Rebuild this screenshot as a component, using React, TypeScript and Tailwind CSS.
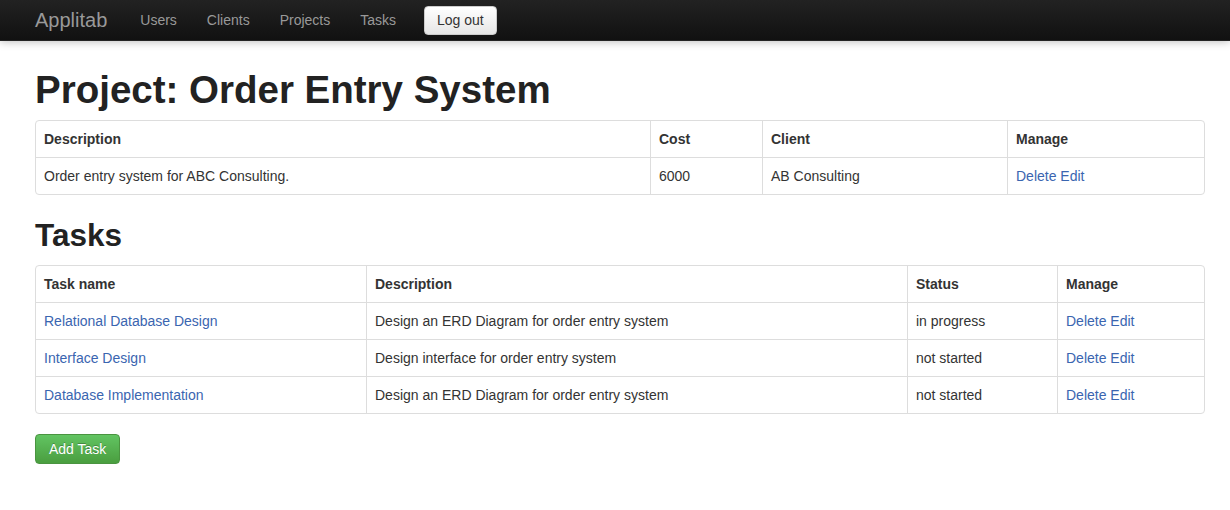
import clsx from "clsx";

const navLinks = ["Users", "Clients", "Projects", "Tasks"];

const tasks = [
  { name: "Relational Database Design", description: "Design an ERD Diagram for order entry system", status: "in progress" },
  { name: "Interface Design", description: "Design interface for order entry system", status: "not started" },
  { name: "Database Implementation", description: "Design an ERD Diagram for order entry system", status: "not started" },
];

function Cell({ children, head, first, top, className }: { children: React.ReactNode; head?: boolean; first?: boolean; top?: boolean; className?: string }) {
  const Tag = head ? "th" : "td";
  return (
    <Tag
      className={clsx(
        "border-[#dddddd] px-2 py-2 text-left align-top leading-5",
        head ? "font-bold" : "font-normal",
        !first && "border-l",
        !top && "border-t",
        className,
      )}
    >
      {children}
    </Tag>
  );
}

function ManageLinks() {
  return (
    <span className="text-[#3a65b0]">
      <a>Delete</a> <a>Edit</a>
    </span>
  );
}

export default function App() {
  return (
    <div className="min-h-[510px] bg-white font-['Liberation_Sans',Arial,sans-serif] text-[14px] leading-5 text-[#333333]">
      <div className="h-[41px] border-b border-[#252525] bg-gradient-to-b from-[#222222] to-[#111111] shadow-[0_1px_8px_rgba(0,0,0,0.25)]">
        <div className="flex h-10 items-center pl-[35px]">
          <span className="pr-[18px] text-[20px] font-light leading-5 text-[#999999]">Applitab</span>
          {navLinks.map((link) => (
            <span key={link} className="px-[15px] text-[14px] text-[#999999]">
              {link}
            </span>
          ))}
          <button className="ml-[13px] h-[29px] rounded-[4px] border border-[#cccccc] bg-gradient-to-b from-white to-[#e6e6e6] px-3 text-[14px] leading-5 text-[#333333]">
            Log out
          </button>
        </div>
      </div>

      <div className="px-[35px] pt-[19px]">
        <h1 className="my-[10px] text-[38.5px] font-bold leading-10 text-[#222222]">Project: Order Entry System</h1>

        <table className="mb-5 w-[1170px] table-fixed border-separate border-spacing-0 rounded-[4px] border border-[#dddddd]">
          <thead>
            <tr>
              <Cell head first top className="w-[614px]">Description</Cell>
              <Cell head top className="w-[112px]">Cost</Cell>
              <Cell head top className="w-[245px]">Client</Cell>
              <Cell head top>Manage</Cell>
            </tr>
          </thead>
          <tbody>
            <tr>
              <Cell first>Order entry system for ABC Consulting.</Cell>
              <Cell>6000</Cell>
              <Cell>AB Consulting</Cell>
              <Cell>
                <ManageLinks />
              </Cell>
            </tr>
          </tbody>
        </table>

        <h2 className="my-[10px] text-[31.5px] font-bold leading-10 text-[#222222]">Tasks</h2>

        <table className="mb-5 w-[1170px] table-fixed border-separate border-spacing-0 rounded-[4px] border border-[#dddddd]">
          <thead>
            <tr>
              <Cell head first top className="w-[330px]">Task name</Cell>
              <Cell head top className="w-[541px]">Description</Cell>
              <Cell head top className="w-[150px]">Status</Cell>
              <Cell head top>Manage</Cell>
            </tr>
          </thead>
          <tbody>
            {tasks.map((task) => (
              <tr key={task.name}>
                <Cell first>
                  <a className="text-[#3a65b0]">{task.name}</a>
                </Cell>
                <Cell>{task.description}</Cell>
                <Cell>{task.status}</Cell>
                <Cell>
                  <ManageLinks />
                </Cell>
              </tr>
            ))}
          </tbody>
        </table>

        <button className="h-[30px] rounded-[4px] border border-[#4a9440] bg-gradient-to-b from-[#62c462] to-[#4a9e3f] px-[13px] text-[14px] leading-5 text-white [text-shadow:0_-1px_0_rgba(0,0,0,0.25)]">
          Add Task
        </button>
      </div>
    </div>
  );
}
